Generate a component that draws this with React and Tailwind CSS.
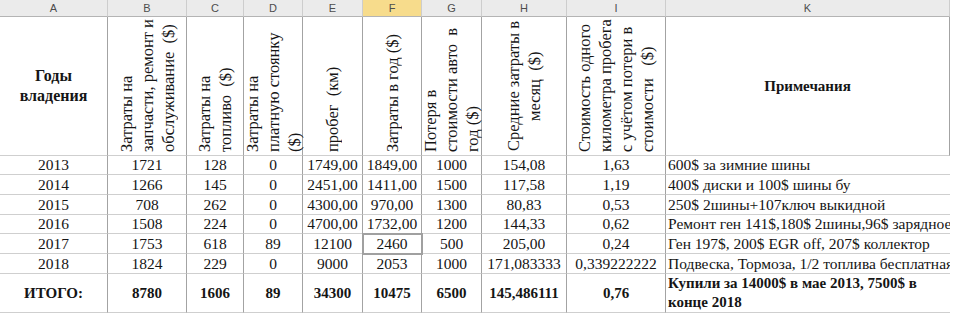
import React from "react";

const letters = ["A", "B", "C", "D", "E", "F", "G", "H", "I", "K"];

// rotated header texts, one entry per line (first line sits leftmost)
const vertical = [
  { lines: ["Затраты на", "запчасти, ремонт и", "обслуживание\u00a0\u00a0($)"], align: "text-left" },
  { lines: ["Затраты на", "топливо\u00a0\u00a0($)"], align: "text-left" },
  { lines: ["Затраты на", "платную стоянку", "($)"], align: "text-left" },
  { lines: ["пробег\u00a0\u00a0(км)"], align: "text-left" },
  { lines: ["Затраты в год ($)"], align: "text-left" },
  { lines: ["Потеря в", "стоимости авто\u00a0\u00a0в", "год ($)"], align: "text-left" },
  { lines: ["Средние затраты в", "месяц\u00a0\u00a0($)"], align: "text-center" },
  {
    lines: ["Стоимость одного", "километра пробега", "с учётом потери в", "стоимости\u00a0\u00a0\u00a0($)"],
    align: "text-left",
  },
];

const rows = [
  { h: "h-[19px]", cells: ["2013", "1721", "128", "0", "1749,00", "1849,00", "1000", "154,08", "1,63"], note: "600$ за зимние шины" },
  { h: "h-[20px]", cells: ["2014", "1266", "145", "0", "2451,00", "1411,00", "1500", "117,58", "1,19"], note: "400$ диски и 100$ шины бу" },
  { h: "h-[20px]", cells: ["2015", "708", "262", "0", "4300,00", "970,00", "1300", "80,83", "0,53"], note: "250$ 2шины+107ключ выкидной" },
  { h: "h-[19px]", cells: ["2016", "1508", "224", "0", "4700,00", "1732,00", "1200", "144,33", "0,62"], note: "Ремонт ген 141$,180$ 2шины,96$ зарядное" },
  { h: "h-[20px]", cells: ["2017", "1753", "618", "89", "12100", "2460", "500", "205,00", "0,24"], note: "Ген 197$, 200$ EGR off, 207$ коллектор", selected: 5 },
  { h: "h-[20px]", cells: ["2018", "1824", "229", "0", "9000", "2053", "1000", "171,083333", "0,339222222"], note: "Подвеска, Тормоза, 1/2 топлива бесплатная" },
];

const totals = ["ИТОГО:", "8780", "1606", "89", "34300", "10475", "6500", "145,486111", "0,76"];

const cell = "border-r border-b border-r-[#a3a3a3] border-b-[#cfcfcf]";

export default function App() {
  return (
    <div className="w-[960px] h-[314px] bg-white overflow-hidden text-[#151515] font-['Liberation_Serif',serif]">
      <div className="grid grid-cols-[108px_79px_57px_59px_60px_59px_60px_85px_99px_284px] w-[950px]">
        {/* column letters */}
        {letters.map((l) => (
          <div
            key={l}
            className={`h-[17px] flex items-center justify-center border-r border-b border-r-[#cdcdcd] border-b-[#b4b4b4] font-['Liberation_Sans',sans-serif] text-[11px] text-[#4d4d4d] ${
              l === "F" ? "bg-[#f7dc8c]" : "bg-[#ebebeb]"
            }`}
          >
            {l}
          </div>
        ))}

        {/* header row */}
        <div className={`${cell} h-[139px] flex items-center justify-center text-center font-bold text-[16px] leading-[20px]`}>
          Годы
          <br />
          владения
        </div>
        {vertical.map((v, i) => (
          <div key={i} className={`${cell} h-[139px] flex justify-center py-[3px]`}>
            <div className={`[writing-mode:vertical-rl] rotate-180 h-full whitespace-nowrap text-[16.5px] leading-[21px] ${v.align}`}>
              {v.lines.map((t, j) => (
                <div key={j}>{t}</div>
              ))}
            </div>
          </div>
        ))}
        <div className={`${cell} h-[139px] flex items-center justify-center font-bold text-[15px]`}>Примечания</div>

        {/* data rows */}
        {rows.map((r) => (
          <React.Fragment key={r.cells[0]}>
            {r.cells.map((c, i) => (
              <div
                key={i}
                className={`${cell} ${r.h} flex items-center justify-center text-[15.5px] whitespace-nowrap ${
                  r.selected === i ? "outline-2 outline-[#a0a0a0] -outline-offset-1 relative" : ""
                }`}
              >
                {c}
              </div>
            ))}
            <div className={`border-b border-b-[#cfcfcf] ${r.h} flex items-center pl-[2px] text-[15.5px] whitespace-nowrap overflow-hidden`}>
              {r.note}
            </div>
          </React.Fragment>
        ))}

        {/* totals */}
        {totals.map((c, i) => (
          <div key={i} className={`${cell} h-[39px] flex items-center justify-center font-bold text-[15px]`}>
            {c}
          </div>
        ))}
        <div className="border-b border-b-[#cfcfcf] h-[39px] flex items-center pl-[2px] font-bold text-[15px] leading-[19px]">
          Купили за 14000$ в мае 2013, 7500$ в конце 2018
        </div>
      </div>
    </div>
  );
}
